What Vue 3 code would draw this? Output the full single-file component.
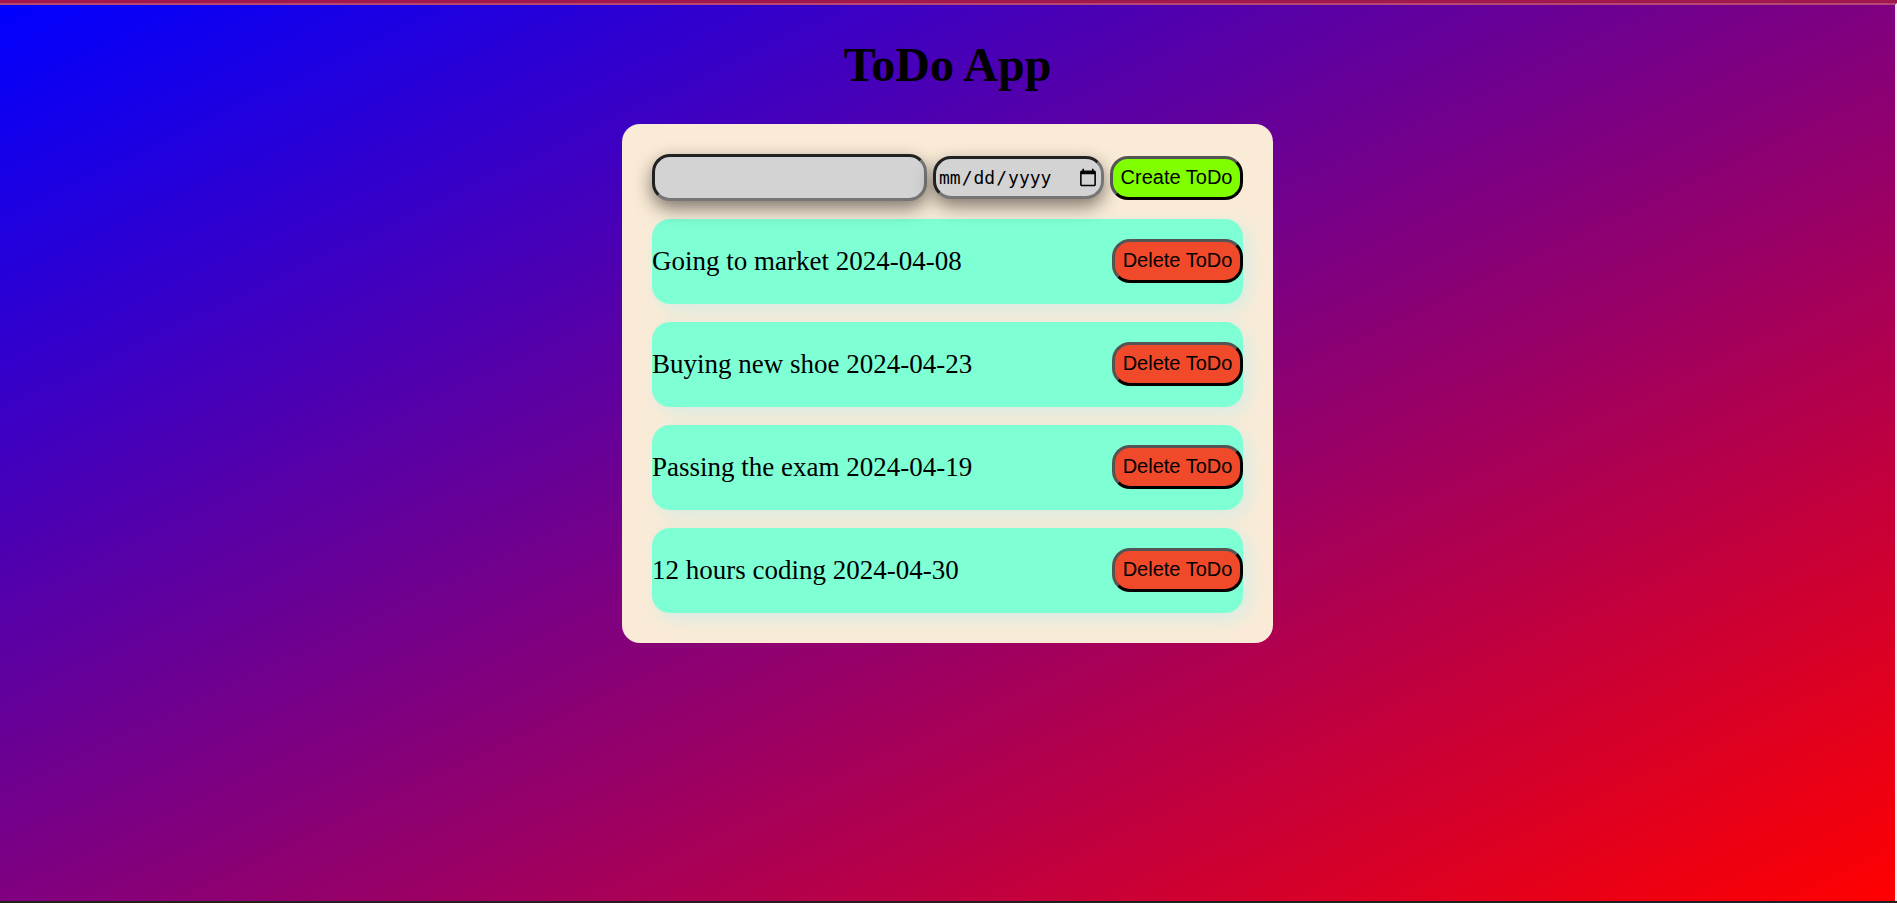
<script setup>
import { ref } from 'vue'

const title = ref('')
const dueDate = ref('')
const todos = ref([
  { id: 1, title: 'Going to market', due: '2024-04-08' },
  { id: 2, title: 'Buying new shoe', due: '2024-04-23' },
  { id: 3, title: 'Passing the exam', due: '2024-04-19' },
  { id: 4, title: '12 hours coding', due: '2024-04-30' }
])

function createTodo() {
  if (!title.value) return
  todos.value.push({ id: Date.now(), title: title.value, due: dueDate.value })
  title.value = ''
  dueDate.value = ''
}

function deleteTodo(id) {
  todos.value = todos.value.filter((todo) => todo.id !== id)
}
</script>

<template>
  <div class="frame">
    <main class="page">
      <h1>ToDo App</h1>
      <section class="card">
        <form class="entry" @submit.prevent="createTodo">
          <input v-model="title" class="field name" type="text" aria-label="ToDo" />
          <input v-model="dueDate" class="field date" type="date" aria-label="Due date" />
          <button class="btn create" type="submit">Create ToDo</button>
        </form>
        <ul class="list">
          <li v-for="todo in todos" :key="todo.id" class="item">
            <span>{{ todo.title }} {{ todo.due }}</span>
            <button class="btn delete" type="button" @click="deleteTodo(todo.id)">Delete ToDo</button>
          </li>
        </ul>
      </section>
    </main>
  </div>
</template>

<style>
body {
  margin: 0;
}
</style>

<style scoped>
.frame {
  box-sizing: border-box;
  min-height: 100vh;
  display: flex;
  flex-direction: column;
  border-top: 3px solid #a1184f;
  border-bottom: 2px solid #231f20;
}

.page {
  flex: 1;
  display: flex;
  flex-direction: column;
  align-items: center;
  border-top: 2px solid #b74674;
  border-right: 2px solid #f5f0f5;
  background: linear-gradient(to bottom right, blue, red) padding-box;
  font-family: "Liberation Serif", "Times New Roman", serif;
  color: #000;
}

h1 {
  margin: 32px 0;
  font-size: 48px;
  line-height: 55px;
}

.card {
  padding: 30px;
  border-radius: 18px;
  background: antiquewhite;
}

.entry {
  position: relative;
  z-index: 1;
  display: flex;
  align-items: center;
  gap: 6px;
}

.field,
.btn {
  box-sizing: border-box;
  border-width: 3px;
  border-radius: 18px;
  color: #000;
}

.field {
  border-style: inset;
  border-color: #767676;
  background: lightgray;
  box-shadow: 0 7px 18px rgba(0, 0, 0, 0.5);
  outline: none;
}

.name {
  width: 275px;
  height: 47px;
  padding: 2px 6px;
  font: 20px "Liberation Sans", Arial, sans-serif;
}

.date {
  width: 171px;
  height: 43px;
  padding: 2px 1px 2px 2px;
  font: 18px "DejaVu Sans Mono", monospace;
}

.date::-webkit-calendar-picker-indicator {
  width: 20px;
  height: 20px;
}

.btn {
  height: 44px;
  border-style: outset;
  border-color: #000;
  padding: 0 2px 1px;
  font: 20px "Liberation Sans", Arial, sans-serif;
  white-space: nowrap;
}

.create {
  width: 133px;
  background: chartreuse;
}

.delete {
  width: 131px;
  background: #f04a2a;
}

.list {
  display: grid;
  gap: 18px;
  margin: 18px 0 0;
  padding: 0;
  list-style: none;
}

.item {
  box-sizing: border-box;
  display: flex;
  align-items: center;
  justify-content: space-between;
  height: 85px;
  padding-bottom: 1px;
  border-radius: 18px;
  background: aquamarine;
  box-shadow: 6px 6px 18px rgba(173, 240, 245, 0.45);
  font-size: 27px;
}
</style>
